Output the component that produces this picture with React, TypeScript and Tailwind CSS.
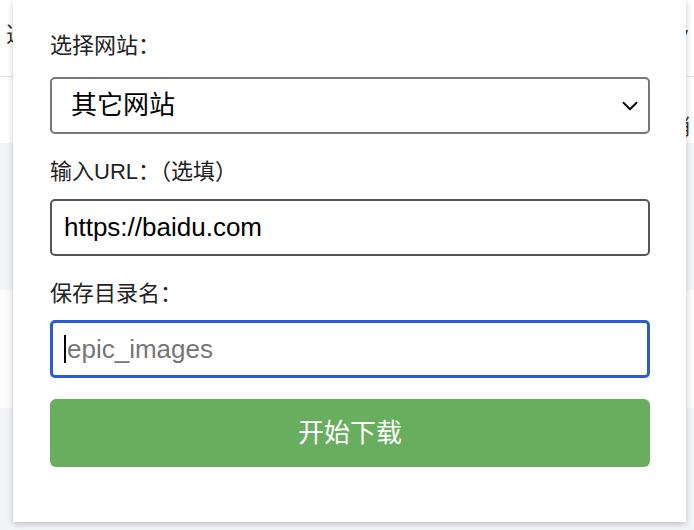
import { ChevronDown } from 'lucide-react';

const font = { fontFamily: '"Liberation Sans", "Noto Sans CJK SC", sans-serif' };

function Background() {
  return (
    <div className="w-full h-[530px] flex flex-col bg-white text-[#333]" style={font}>
      <div className="h-[77px] shrink-0 flex items-center justify-between border-b border-[#e4e4e7] px-[6px] text-[22px] pb-[8px]">
        <span>选择</span>
        <span>key</span>
      </div>
      <div className="h-[66px] shrink-0 flex items-end justify-end px-[4px] text-[22px]">
        <span>销</span>
      </div>
      <div className="h-[147px] shrink-0 bg-[#f3f4f8]" />
      <div className="h-[118px] shrink-0 bg-[#fcfcfd]" />
      <div className="flex-1 bg-[#f3f4f8]" />
    </div>
  );
}

export default function App() {
  return (
    <div className="relative w-[694px] h-[530px] overflow-hidden">
      <Background />

      {/* Popup */}
      <div
        className="absolute left-[13px] top-0 w-[673px] h-[522px] bg-white shadow-[0_2px_6px_rgba(0,0,0,0.22)] pt-[32px] pl-[37px] pr-[36px]"
        style={font}
      >
        <div className="text-[22px] leading-[28px] text-[#222] mb-[17px]">选择网站：</div>
        <div className="relative h-[57px] border-2 border-[#777] rounded-[5px] flex items-center pl-[19px] text-[26px] text-black">
          其它网站
          <ChevronDown className="absolute right-[5px] w-[26px] h-[26px]" strokeWidth={1.7} />
        </div>

        <div className="text-[22px] leading-[28px] text-[#222] mt-[24px] mb-[13px]">输入URL：（选填）</div>
        <div className="h-[57px] border-2 border-[#555] rounded-[5px] flex items-center pl-[12px] text-[26px] text-black">
          https://baidu.com
        </div>

        <div className="text-[22px] leading-[28px] text-[#222] mt-[24px] mb-[12px]">保存目录名：</div>
        <div className="h-[58px] border-[3px] border-[#2a5bcf] rounded-[5px] flex items-center pl-[11px] text-[26px]">
          <span className="w-[2px] h-[28px] bg-black mr-[1px]" />
          <span className="text-[#767676]">epic_images</span>
        </div>

        <button className="mt-[21px] w-full h-[68px] bg-[#69ad5e] rounded-[6px] text-white text-[26px] flex items-center justify-center">
          开始下载
        </button>
      </div>
    </div>
  );
}
